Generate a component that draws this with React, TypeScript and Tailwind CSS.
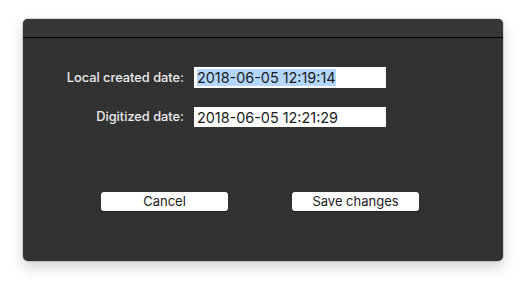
import React from "react";

export default function App() {
  return (
    <div className="w-[526px] h-[289px] bg-white pt-[19px] pl-[23px]" style={{ fontFamily: "Inter, 'Liberation Sans', sans-serif" }}>
      <div className="w-[480px] h-[242px] rounded-[5px] bg-[#323232] shadow-[0_0_0_1px_rgba(0,0,0,0.12),0_6px_14px_rgba(0,0,0,0.18)] overflow-hidden flex flex-col">
        <div className="h-[19px] bg-[#373737] border-b border-black shrink-0" />
        <div className="flex flex-col pt-[29px]">
          <div className="flex items-center h-[21px]">
            <div className="w-[162px] text-right text-[12.8px] font-medium text-[#ececec] pr-[1px]">Local created date:</div>
            <div className="ml-[9px] w-[192px] h-[21px] bg-white flex items-center pl-[3px]">
              <span className="bg-[#b3d7ff] text-[14.4px] leading-[17px] text-[#1a1a1a]">2018-06-05 12:19:14</span>
            </div>
          </div>
          <div className="flex items-center h-[20px] mt-[19px]">
            <div className="w-[162px] text-right text-[12.8px] font-medium text-[#ececec] pr-[1px]">Digitized date:</div>
            <div className="ml-[9px] w-[192px] h-[20px] bg-white flex items-center pl-[3px]">
              <span className="text-[14.4px] leading-[17px] text-[#1a1a1a]">2018-06-05 12:21:29</span>
            </div>
          </div>
          <div className="flex mt-[65px] pl-[78px] gap-[64px]">
            <button className="w-[127px] h-[19px] rounded-[3px] bg-white text-[13px] leading-[19px] text-[#1a1a1a] shadow-[0_0.5px_1px_rgba(0,0,0,0.4)]">Cancel</button>
            <button className="w-[127px] h-[19px] rounded-[3px] bg-white text-[13px] leading-[19px] text-[#1a1a1a] shadow-[0_0.5px_1px_rgba(0,0,0,0.4)]">Save changes</button>
          </div>
        </div>
      </div>
    </div>
  );
}
